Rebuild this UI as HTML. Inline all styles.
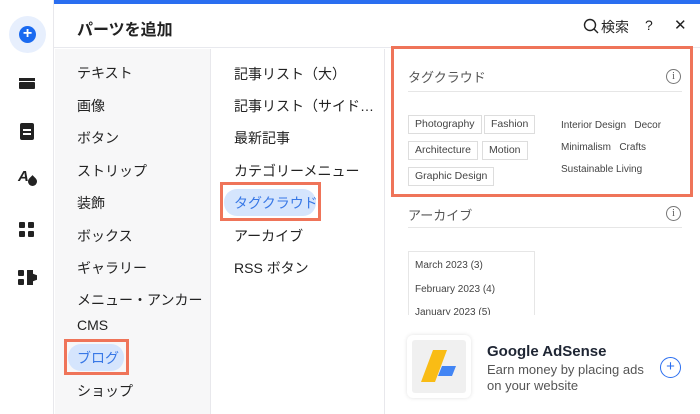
<!DOCTYPE html>
<html><head><meta charset="utf-8"><style>
*{margin:0;padding:0;box-sizing:border-box}
body{width:700px;height:414px;overflow:hidden;background:#fff;font-family:"Liberation Sans","Noto Sans CJK JP",sans-serif;color:#222;position:relative}
.a{position:absolute}
.side{left:0;top:0;width:54px;height:414px;background:#fff;border-right:1px solid #e8e8ec}
.top{left:54px;top:0;width:646px;height:4px;background:#2a6ef0}
.hdr{left:54px;top:4px;width:646px;height:44px;border-bottom:1px solid #e8e9ee}
.c1{left:55px;top:49px;width:156px;height:365px;background:#f7f7f8;border-right:1px solid #e8e8ec}
.c2{left:211px;top:49px;width:174px;height:365px;background:#fff;border-right:1px solid #e8e8ec}
.t{font-size:14px;color:#222;white-space:nowrap}
.s{font-size:13px;color:#555}
.tag{position:absolute;font-size:10.5px;color:#444;border:1px solid #ddd;height:19px;line-height:17px;padding:0 6px;background:#fff}
.pl{font-size:10px;color:#444}
.or{border:3px solid #ef7459}
</style></head><body>
<div class="a side"></div>
<div class="a" style="left:9px;top:16px;width:37px;height:37px;border-radius:50%;background:#e7effd"></div>
<div class="a" style="left:19px;top:26px;width:17px;height:17px;border-radius:50%;background:#1a6af0;color:#fff;font-size:16px;line-height:16px;text-align:center;font-weight:bold">+</div>
<div class="a" style="left:19px;top:78px;width:16px;height:3px;background:#222"></div>
<div class="a" style="left:19px;top:82px;width:16px;height:7px;background:#222;border-radius:1px"></div>
<div class="a" style="left:20px;top:123px;width:14px;height:17px;background:#222;border-radius:2px"></div>
<div class="a" style="left:23px;top:129px;width:8px;height:2px;background:#fff"></div>
<div class="a" style="left:23px;top:133px;width:8px;height:2px;background:#fff"></div>
<div class="a" style="left:18px;top:168px;font-size:15px;font-weight:bold;font-style:italic">A</div>
<div class="a" style="left:28px;top:177px;width:9px;height:9px;border-radius:50% 0 50% 50%;transform:rotate(-45deg);background:#222"></div>
<div class="a" style="left:19px;top:222px;width:6px;height:6px;background:#222;border-radius:1px"></div>
<div class="a" style="left:28px;top:222px;width:6px;height:6px;background:#222;border-radius:1px"></div>
<div class="a" style="left:19px;top:231px;width:6px;height:6px;background:#222;border-radius:1px"></div>
<div class="a" style="left:28px;top:231px;width:6px;height:6px;background:#222;border-radius:1px"></div>
<div class="a" style="left:18px;top:270px;width:6px;height:6px;background:#222;border-radius:1px"></div>
<div class="a" style="left:18px;top:279px;width:6px;height:6px;background:#222;border-radius:1px"></div>
<div class="a" style="left:27px;top:270px;width:10px;height:15px;background:#222;clip-path:polygon(0 0,60% 0,60% 25%,100% 35%,100% 65%,60% 75%,60% 100%,0 100%)"></div>

<div class="a top"></div>
<div class="a hdr"></div>
<div class="a" style="left:77px;top:16px;font-size:16px;font-weight:bold">パーツを追加</div>
<svg class="a" style="left:583px;top:18px" width="16" height="16" viewBox="0 0 16 16"><circle cx="7" cy="7" r="5.5" fill="none" stroke="#222" stroke-width="1.4"/><path d="M11 11L15 15" stroke="#222" stroke-width="1.4"/></svg>
<div class="a t" style="left:601px;top:17px;font-size:14px">検索</div>
<div class="a t" style="left:645px;top:17px;font-size:14px">?</div>
<div class="a t" style="left:674px;top:16px;font-size:15px">✕</div>

<div class="a c1"></div>
<div class="a c2"></div>
<div class="a t" style="left:77px;top:63px">テキスト</div>
<div class="a t" style="left:77px;top:96px">画像</div>
<div class="a t" style="left:77px;top:128px">ボタン</div>
<div class="a t" style="left:77px;top:161px">ストリップ</div>
<div class="a t" style="left:77px;top:193px">装飾</div>
<div class="a t" style="left:77px;top:226px">ボックス</div>
<div class="a t" style="left:77px;top:258px">ギャラリー</div>
<div class="a t" style="left:77px;top:290px">メニュー・アンカー</div>
<div class="a t" style="left:77px;top:317px">CMS</div>
<div class="a" style="left:68px;top:344px;width:56px;height:27px;border-radius:13px;background:#d5e5fd"></div>
<div class="a t" style="left:77px;top:348px;color:#3878e6">ブログ</div>
<div class="a or" style="left:64px;top:339px;width:65px;height:36px"></div>
<div class="a t" style="left:77px;top:381px">ショップ</div>

<div class="a t" style="left:234px;top:64px">記事リスト（大）</div>
<div class="a t" style="left:234px;top:96px">記事リスト（サイド…</div>
<div class="a t" style="left:234px;top:128px">最新記事</div>
<div class="a t" style="left:234px;top:161px">カテゴリーメニュー</div>
<div class="a" style="left:224px;top:189px;width:92px;height:27px;border-radius:13px;background:#d5e5fd"></div>
<div class="a t" style="left:234px;top:193px;color:#3878e6">タグクラウド</div>
<div class="a or" style="left:220px;top:182px;width:101px;height:39px"></div>
<div class="a t" style="left:234px;top:226px">アーカイブ</div>
<div class="a t" style="left:234px;top:258px">RSS ボタン</div>

<div class="a or" style="left:391px;top:46px;width:302px;height:151px"></div>
<div class="a s" style="left:408px;top:67px">タグクラウド</div>
<div class="a" style="left:666px;top:69px;width:15px;height:15px;border:1px solid #777;border-radius:50%;font-size:10px;line-height:13px;text-align:center;color:#555;font-family:'Liberation Serif',serif">i</div>
<div class="a" style="left:408px;top:91px;width:274px;height:1px;background:#e6e6e6"></div>
<div class="tag" style="left:408px;top:115px">Photography</div>
<div class="tag" style="left:484px;top:115px">Fashion</div>
<div class="tag" style="left:408px;top:141px">Architecture</div>
<div class="tag" style="left:482px;top:141px">Motion</div>
<div class="tag" style="left:408px;top:167px">Graphic Design</div>
<div class="a pl" style="left:561px;top:120px">Interior Design&nbsp;&nbsp; Decor</div>
<div class="a pl" style="left:561px;top:142px">Minimalism&nbsp;&nbsp; Crafts</div>
<div class="a pl" style="left:561px;top:164px">Sustainable Living</div>

<div class="a s" style="left:408px;top:205px">アーカイブ</div>
<div class="a" style="left:666px;top:206px;width:15px;height:15px;border:1px solid #777;border-radius:50%;font-size:10px;line-height:13px;text-align:center;color:#555;font-family:'Liberation Serif',serif">i</div>
<div class="a" style="left:408px;top:227px;width:274px;height:1px;background:#e6e6e6"></div>
<div class="a" style="left:408px;top:251px;width:127px;height:64px;border:1px solid #e6e6e6;border-bottom:none;overflow:hidden">
<div class="pl" style="position:absolute;left:6px;top:8px">March 2023 (3)</div>
<div class="pl" style="position:absolute;left:6px;top:32px">February 2023 (4)</div>
<div class="pl" style="position:absolute;left:6px;top:55px">January 2023 (5)</div>
</div>
<div class="a" style="left:407px;top:335px;width:64px;height:63px;border-radius:6px;background:#fff;box-shadow:0 0 4px rgba(0,0,0,.12)"></div>
<div class="a" style="left:412px;top:340px;width:54px;height:53px;border-radius:3px;background:#f0f0f0"></div>
<svg class="a" style="left:420px;top:348px" width="40" height="36" viewBox="0 0 40 36"><polygon points="13,2 27,2 15,34 1,34" fill="#f9bc15"/><polygon points="22,18 36,18 32,28 18,28" fill="#4285f4"/></svg>
<div class="a" style="left:487px;top:343px;font-size:15px;font-weight:bold;color:#1e2533">Google AdSense</div>
<div class="a" style="left:487px;top:362px;font-size:13px;color:#555;line-height:16px">Earn money by placing ads<br>on your website</div>
<div class="a" style="left:660px;top:357px;width:21px;height:21px;border:1.5px solid #2a6ef0;border-radius:50%;color:#2a6ef0;font-size:15px;line-height:18px;text-align:center">+</div>
</body></html>
